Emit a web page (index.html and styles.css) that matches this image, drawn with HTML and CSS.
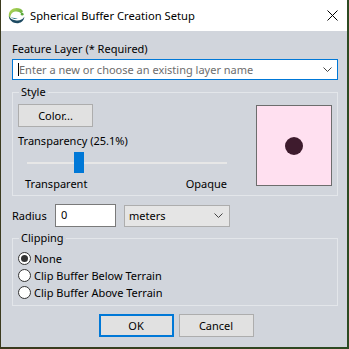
FILE: index.html
```html
<!DOCTYPE html>
<html>
<head>
<meta charset="utf-8">
<link rel="stylesheet" href="styles.css">
</head>
<body>
<div class="window">
  <div class="titlebar">
    <svg class="appicon" width="17" height="17" viewBox="0 0 17 17">
      <defs>
        <linearGradient id="g1" x1="0" y1="0" x2="1" y2="1">
          <stop offset="0" stop-color="#c3de5a"/>
          <stop offset="1" stop-color="#3f9a3a"/>
        </linearGradient>
      </defs>
      <path d="M15 4.2 C12.8 0.5 6.5 -0.3 2.8 3.2 C0.2 5.8 0.2 10 2.3 12.3 C1.8 8.8 3.5 5.3 7 4.6 C9.6 4.1 11.8 5 13 6.6 Z" fill="url(#g1)"/>
      <circle cx="14.2" cy="7.2" r="1.4" fill="#5aa83a"/>
      <path d="M0.8 9.3 C1.3 14 6 16.8 10.2 16.2 C13.8 15.7 16.3 13 16.3 9.8 C14.8 12.6 11.6 13.7 8.5 13.4 C5 13.1 2.4 11.8 0.8 9.3 Z" fill="#1d4a62"/>
      <path d="M2.8 10.2 C4.6 11.8 7.2 12.3 9.8 11.8 C8.2 11.2 5.5 10.7 2.8 10.2 Z" fill="#2f7a8a"/>
    </svg>
    <span class="title">Spherical Buffer Creation Setup</span>
    <svg class="close" width="11" height="11" viewBox="0 0 11 11">
      <path d="M0.5 0.5 L10.5 10.5 M10.5 0.5 L0.5 10.5" stroke="#000" stroke-width="1" fill="none"/>
    </svg>
  </div>
  <div class="content">
    <div class="field-label">Feature Layer (* Required)</div>
    <div class="combo">
      <span class="caret"></span>
      <span class="placeholder">Enter a new or choose an existing layer name</span>
      <svg class="chev" width="9" height="5" viewBox="0 0 9 5"><path d="M0.5 0.5 L4.5 4.5 L8.5 0.5" stroke="#444" fill="none"/></svg>
    </div>

    <fieldset class="group style-group">
      <legend>Style</legend>
      <div class="style-body">
        <div class="style-left">
          <button class="btn color-btn">Color...</button>
          <div class="trans-label">Transparency (25.1%)</div>
          <div class="slider">
            <div class="track"></div>
            <div class="thumb" style="margin-left:47px"></div>
          </div>
          <div class="slider-labels"><span>Transparent</span><span>Opaque</span></div>
        </div>
        <div class="preview"><div class="dot"></div></div>
      </div>
    </fieldset>

    <div class="radius-row">
      <span class="radius-label">Radius</span>
      <div class="textbox">0</div>
      <div class="select">
        <span>meters</span>
        <svg class="chev" width="9" height="5" viewBox="0 0 9 5"><path d="M0.5 0.5 L4.5 4.5 L8.5 0.5" stroke="#444" fill="none"/></svg>
      </div>
    </div>

    <fieldset class="group clip-group">
      <legend>Clipping</legend>
      <div class="radio-row"><span class="radio checked"></span><span>None</span></div>
      <div class="radio-row"><span class="radio"></span><span>Clip Buffer Below Terrain</span></div>
      <div class="radio-row"><span class="radio"></span><span>Clip Buffer Above Terrain</span></div>
    </fieldset>

    <div class="buttons">
      <button class="btn default">OK</button>
      <button class="btn">Cancel</button>
    </div>
  </div>
</div>
</body>
</html>
```
FILE: styles.css
```css
* { box-sizing: border-box; }
html, body { margin: 0; padding: 0; }
body {
  width: 349px;
  height: 349px;
  background: linear-gradient(90deg, #3b3a1e 0%, #2c4a22 100%);
  font-family: "Noto Sans", "Open Sans", sans-serif;
  font-size: 11px;
  color: #000;
  overflow: hidden;
}
.window {
  margin-left: 1px;
  width: 346px;
  height: 347px;
  background: #d1d5dc;
  display: flex;
  flex-direction: column;
}
.titlebar {
  height: 31px;
  background: #fff;
  display: flex;
  align-items: center;
}
.appicon { margin-left: 7px; }
.title {
  margin-left: 5px;
  font-size: 11.2px;
  flex: 1;
}
.close { margin-right: 9px; }
.content {
  padding: 0 9px 0 11px;
  display: flex;
  flex-direction: column;
}
.field-label {
  margin-top: 10px;
  line-height: 16px;
}
.combo {
  margin-top: 2px;
  height: 21px;
  border: 1px solid #0078d7;
  background: #fff;
  display: flex;
  align-items: center;
  padding-left: 5px;
  padding-right: 5px;
}
.caret {
  width: 1px;
  height: 13px;
  background: #000;
}
.placeholder {
  color: #6d6d6d;
  flex: 1;
}
.group {
  margin: 0;
  border: 1px solid #e3e6ea;
  padding: 0 5px;
  min-width: 0;
}
.group legend {
  padding: 0 2px;
  margin-left: 1px;
  line-height: 16px;
}
.style-group {
  margin-top: 4px;
  padding-top: 4px;
  padding-bottom: 3px;
}
.style-body {
  display: flex;
}
.style-left {
  display: flex;
  flex-direction: column;
  width: 210px;
}
.btn {
  font: inherit;
  color: #000;
  width: 75px;
  height: 23px;
  background: #e1e1e1;
  border: 1px solid #adadad;
  padding: 0;
  margin: 0;
}
.trans-label {
  margin-top: 6px;
  line-height: 16px;
}
.slider {
  margin-top: 3px;
  margin-left: 9px;
  width: 200px;
  height: 21px;
  display: grid;
}
.track {
  grid-area: 1 / 1;
  align-self: center;
  height: 2px;
  background: #e7e7e7;
}
.thumb {
  grid-area: 1 / 1;
  width: 10px;
  height: 21px;
  background: #0078d7;
  justify-self: start;
}
.slider-labels {
  margin-top: 3px;
  margin-left: 7px;
  width: 202px;
  display: flex;
  justify-content: space-between;
  line-height: 16px;
}
.preview {
  margin-left: auto;
  margin-right: 0;
  margin-top: 1px;
  width: 76px;
  height: 81px;
  background: #ffe0f0;
  border: 1px solid #6d6d6d;
  display: flex;
  align-items: center;
  justify-content: center;
}
.dot {
  width: 18px;
  height: 18px;
  border-radius: 50%;
  background: #3e1b2d;
}
.radius-row {
  margin-top: 8px;
  display: flex;
  align-items: center;
  height: 23px;
}
.radius-label { width: 43px; }
.textbox {
  width: 61px;
  height: 23px;
  background: #fff;
  border: 1px solid #7a7a7a;
  padding-left: 5px;
  line-height: 19px;
}
.select {
  margin-left: 8px;
  width: 106px;
  height: 22px;
  background: #e5e5e5;
  border: 1px solid #adadad;
  display: flex;
  align-items: center;
  justify-content: space-between;
  padding: 0 6px 0 4px;
}
.clip-group {
  margin-top: 3px;
  padding-top: 4px;
  padding-bottom: 4px;
}
.radio-row {
  display: flex;
  align-items: center;
  height: 17px;
}
.radio {
  width: 13px;
  height: 13px;
  border: 1px solid #333;
  border-radius: 50%;
  background: #fff;
  margin-right: 3px;
  display: flex;
  align-items: center;
  justify-content: center;
}
.radio.checked::after {
  content: "";
  width: 7px;
  height: 7px;
  border-radius: 50%;
  background: #333;
}
.buttons {
  margin-top: 8px;
  display: flex;
  justify-content: center;
  gap: 5px;
  padding-left: 2px;
}
.btn.default {
  border: 2px solid #0078d7;
}
```
